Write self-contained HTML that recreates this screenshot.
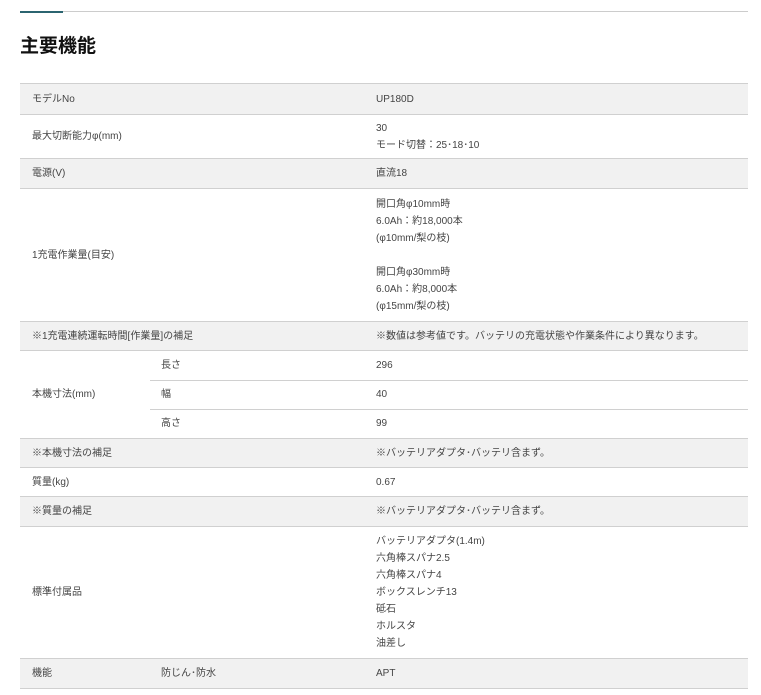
<!DOCTYPE html>
<html><head><meta charset="utf-8"><style>
*{margin:0;padding:0;box-sizing:border-box}
body{width:761px;height:695px;background:#fff;font-family:"Liberation Sans","Noto Sans CJK JP",sans-serif;color:#333;position:relative;overflow:hidden}
.hl{position:absolute;left:20px;top:11px;width:728px;height:1px;background:#ccc}
.tl{position:absolute;left:20px;top:11px;width:43px;height:2px;background:#2b6470}
h1{position:absolute;left:20px;top:31px;font-size:19px;font-weight:bold;color:#111;font-family:"Noto Sans CJK JP",sans-serif}
.r{position:absolute;left:20px;width:728px;border-top:1px solid #d0d0d0}
.g{background:#f1f1f1}
.c{position:absolute;font-size:10px;line-height:17px;color:#444;display:flex;align-items:center;height:100%;top:0}
.a{left:12px}.b{left:141px}.v{left:356px}
.sub{position:absolute;left:150px;width:598px;border-top:1px solid #d0d0d0}
.end{position:absolute;left:20px;width:728px;top:688px;border-top:1px solid #d0d0d0}
</style></head><body>
<div class="hl"></div><div class="tl"></div>
<h1>主要機能</h1>

<div class="r g" style="top:83px;height:31px"><div class="c a">モデルNo</div><div class="c v">UP180D</div></div>
<div class="r" style="top:114px;height:44px"><div class="c a">最大切断能力φ(mm)</div><div class="c v">30<br>モード切替：25･18･10</div></div>
<div class="r g" style="top:158px;height:30px"><div class="c a">電源(V)</div><div class="c v">直流18</div></div>
<div class="r" style="top:188px;height:133px"><div class="c a">1充電作業量(目安)</div><div class="c v" style="padding-top:1px">開口角φ10mm時<br>6.0Ah：約18,000本<br>(φ10mm/梨の枝)<br><br>開口角φ30mm時<br>6.0Ah：約8,000本<br>(φ15mm/梨の枝)</div></div>
<div class="r g" style="top:321px;height:29px"><div class="c a">※1充電連続運転時間[作業量]の補足</div><div class="c v">※数値は参考値です。バッテリの充電状態や作業条件により異なります。</div></div>
<div class="r" style="top:350px;height:88px"><div class="c a">本機寸法(mm)</div></div>
<div class="c" style="top:350px;height:30px;left:161px">長さ</div><div class="c" style="top:350px;height:30px;left:376px">296</div>
<div class="sub" style="top:380px"></div>
<div class="c" style="top:380px;height:29px;left:161px">幅</div><div class="c" style="top:380px;height:29px;left:376px">40</div>
<div class="sub" style="top:409px"></div>
<div class="c" style="top:409px;height:29px;left:161px">高さ</div><div class="c" style="top:409px;height:29px;left:376px">99</div>
<div class="r g" style="top:438px;height:29px"><div class="c a">※本機寸法の補足</div><div class="c v">※バッテリアダプタ･バッテリ含まず。</div></div>
<div class="r" style="top:467px;height:29px"><div class="c a">質量(kg)</div><div class="c v">0.67</div></div>
<div class="r g" style="top:496px;height:30px"><div class="c a">※質量の補足</div><div class="c v">※バッテリアダプタ･バッテリ含まず。</div></div>
<div class="r" style="top:526px;height:132px"><div class="c a">標準付属品</div><div class="c v">バッテリアダプタ(1.4m)<br>六角棒スパナ2.5<br>六角棒スパナ4<br>ボックスレンチ13<br>砥石<br>ホルスタ<br>油差し</div></div>
<div class="r g" style="top:658px;height:30px"><div class="c a">機能</div><div class="c b">防じん･防水</div><div class="c v">APT</div></div>
<div class="end"></div>
</body></html>
